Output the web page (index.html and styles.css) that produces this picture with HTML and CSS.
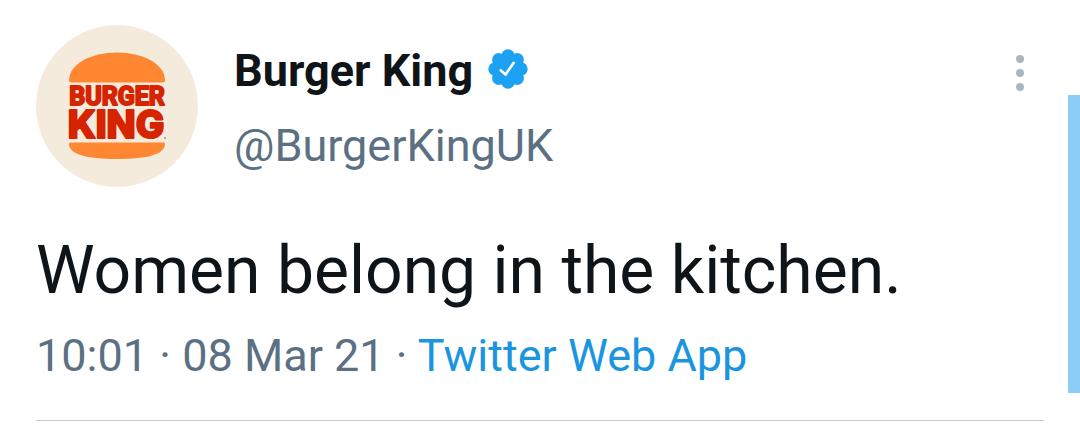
FILE: index.html
```html
<!DOCTYPE html>
<html lang="en">
<head>
    <meta charset="UTF-8">
    <meta name="viewport" content="width=device-width, initial-scale=1.0">
    <title>Burger King (@BurgerKingUK)</title>
    <link rel="stylesheet" href="styles.css">
</head>
<body>
    <div class="page">
        <article class="tweet">
            <header class="tweet-header">
                <svg class="avatar" viewBox="0 0 162 162" role="img" aria-label="Burger King logo">
                    <circle cx="81" cy="81" r="81" fill="#f5ebdc"/>
                    <path d="M35 57.500Q33 57.500 33 55.500C33 39 55 27.500 81 27.500S129 39 129 55.500Q129 57.500 127 57.500Z" fill="#ff8732"/>
                    <path d="M34 117.500H128Q129 117.500 129 119C129 129 112 134 81 134S33 129 33 119Q33 117.500 34 117.500Z" fill="#ff8732"/>
                    <text class="logo-text"><tspan class="logo-top" x="81" y="80">BURGER</tspan><tspan class="logo-bottom" x="80" y="113">KING</tspan></text>
                    <circle cx="129" cy="113" r="1" fill="#d9796a"/>
                </svg>

                <div class="author">
                    <div class="name-row">
                        <h1 class="name">Burger King</h1>
                        <svg class="badge" viewBox="0 0 40 40" role="img" aria-label="Verified account">
                            <g fill="#1da1f2">
                                <circle cx="20" cy="20" r="15"/>
                                <circle cx="20" cy="7" r="6.700"/>
                                <circle cx="29.200" cy="10.800" r="6.700"/>
                                <circle cx="33" cy="20" r="6.700"/>
                                <circle cx="29.200" cy="29.200" r="6.700"/>
                                <circle cx="20" cy="33" r="6.700"/>
                                <circle cx="10.800" cy="29.200" r="6.700"/>
                                <circle cx="7" cy="20" r="6.700"/>
                                <circle cx="10.800" cy="10.800" r="6.700"/>
                            </g>
                            <path d="M12.700 21.300L17.500 25.600L25.700 13.800" fill="none" stroke="#fff" stroke-width="2.600" stroke-linecap="round" stroke-linejoin="round"/>
                        </svg>
                    </div>
                    <p class="handle">@BurgerKingUK</p>
                </div>

                <button class="menu-btn" type="button" aria-label="More options">
                    <svg class="menu-icon" viewBox="0 0 8 36">
                        <circle cx="4" cy="4" r="4"/>
                        <circle cx="4" cy="18" r="4"/>
                        <circle cx="4" cy="32" r="4"/>
                    </svg>
                </button>
            </header>

            <p class="tweet-text">Women belong in the kitchen.</p>
            <p class="tweet-meta">10:01 · 08 Mar 21 · <a href="#">Twitter Web App</a></p>
        </article>

        <div class="side-bar"></div>
    </div>
</body>
</html>
```
FILE: styles.css
```css
/* Reset */
* {
    margin: 0;
    padding: 0;
    box-sizing: border-box;
}

body {
    font-family: Roboto, 'Liberation Sans', sans-serif;
    background-color: #fff;
    color: #0f1419;
}

.page {
    display: flex;
}

.tweet {
    flex: 1;
    padding: 25px 24px 4px 36px;
}

.tweet-header {
    display: flex;
    align-items: flex-start;
}

.avatar {
    width: 162px;
    height: 162px;
    flex-shrink: 0;
}

.logo-text {
    fill: #d62300;
    stroke: #d62300;
    stroke-width: 2px;
    stroke-linejoin: round;
    text-anchor: middle;
}

.logo-top {
    font-size: 25px;
    font-weight: 700;
}

.logo-bottom {
    font-family: Inter, Roboto, sans-serif;
    font-size: 38px;
    font-weight: 800;
}

.author {
    flex: 1;
    padding: 8px 0 0 36px;
}

.name-row {
    display: flex;
    align-items: center;
    gap: 15px;
}

.name {
    font-size: 45px;
    font-weight: 700;
    line-height: 75px;
}

.badge {
    width: 40px;
    height: 40px;
    margin-bottom: 4px;
}

.handle {
    font-size: 45px;
    line-height: 75px;
    color: #5b7083;
}

.menu-btn {
    display: flex;
    justify-content: center;
    width: 48px;
    padding: 30px 0;
    border: none;
    background: none;
    cursor: pointer;
}

.menu-icon {
    width: 8px;
    height: 36px;
    fill: #a9b7c1;
}

.tweet-text {
    margin-top: 45px;
    font-size: 66px;
    line-height: 78px;
}

.tweet-meta {
    margin-top: 19px;
    padding-bottom: 37px;
    border-bottom: 1px solid #c4cad1;
    font-size: 45px;
    line-height: 54px;
    color: #5b7083;
}

.tweet-meta a {
    color: #1b95e0;
    text-decoration: none;
}

.side-bar {
    width: 12px;
    margin: 95px 0 32px;
    background-color: #8ccdf7;
}
```
